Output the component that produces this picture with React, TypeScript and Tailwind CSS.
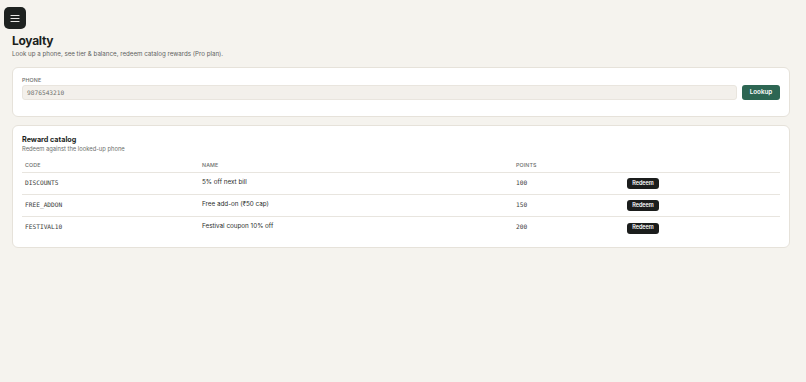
import React from "react";

const rewards = [
  { code: "DISCOUNT5", name: "5% off next bill", points: 100 },
  { code: "FREE_ADDON", name: "Free add-on (₹50 cap)", points: 150 },
  { code: "FESTIVAL10", name: "Festival coupon 10% off", points: 200 },
];

const mono = "font-['DejaVu_Sans_Mono','Liberation_Mono',monospace]";
const cols = "grid grid-cols-[177px_314px_111px_1fr] items-center";

export default function App() {
  return (
    <div className="min-h-[382px] w-full bg-[#f5f3ee] font-['Inter','Noto_Sans',sans-serif] text-[#1c1f1d]">
      <div className="px-[4px] pt-[7px]">
        <button className="flex h-[22px] w-[22px] items-center justify-center rounded-[5px] bg-[#1e2220]">
          <svg width="10" height="9" viewBox="0 0 10 9" fill="none">
            <path d="M1 1.5h8M1 4.5h8M1 7.5h8" stroke="#e9e9e6" strokeWidth="1.2" strokeLinecap="round" />
          </svg>
        </button>
      </div>
      <div className="flex flex-col pl-[12px] pr-[16px]">
        <h1 className="mt-[5px] text-[12px] font-bold leading-[14px] tracking-tight">Loyalty</h1>
        <p className="mt-[1px] text-[6.2px] leading-[9px] text-[#5e625f]">
          Look up a phone, see tier &amp; balance, redeem catalog rewards (Pro plan).
        </p>

        <div className="mt-[9px] rounded-[6px] border border-[#e6e2da] bg-white px-[9px] pt-[9px] pb-[16px]">
          <div className="text-[5.3px] font-medium leading-[7px] tracking-wide text-[#6b6e6b]">PHONE</div>
          <div className="mt-[1px] flex items-center gap-[5px]">
            <div className={`flex h-[15px] flex-1 items-center rounded-[3px] border border-[#e9e5de] bg-[#f3f0eb] px-[4px] text-[6.2px] text-[#6f716e] ${mono}`}>
              9876543210
            </div>
            <button className="h-[15px] w-[38px] rounded-[3px] bg-[#2d6653] text-[6.3px] font-semibold text-white">
              Lookup
            </button>
          </div>
        </div>

        <div className="mt-[8px] rounded-[6px] border border-[#e6e2da] bg-white px-[9px] pt-[9px] pb-[8px]">
          <h2 className="text-[7.2px] font-bold leading-[10px]">Reward catalog</h2>
          <p className="text-[5.8px] leading-[8px] text-[#6b6e6b]">Redeem against the looked-up phone</p>
          <div className={`${cols} mt-[6px] h-[14px] border-b border-[#e8e5df] text-[5.3px] font-medium tracking-wide text-[#6b6e6b]`}>
            <div className="px-[3px]">CODE</div>
            <div className="px-[3px]">NAME</div>
            <div className="px-[3px]">POINTS</div>
            <div />
          </div>
          {rewards.map((r, i) => (
            <div
              key={r.code}
              className={`${cols} h-[22px] ${i < rewards.length - 1 ? "border-b border-[#e8e5df]" : ""}`}
            >
              <div className={`px-[3px] pb-[2px] text-[6.2px] text-[#3a3d3b] ${mono}`}>{r.code}</div>
              <div className="px-[3px] pb-[2px] text-[6.3px] text-[#2a2d2b]">{r.name}</div>
              <div className={`px-[3px] pb-[2px] text-[6.2px] text-[#3a3d3b] ${mono}`}>{r.points}</div>
              <div className="flex items-center px-[3px]">
                <button className="flex h-[11px] w-[32px] items-center justify-center rounded-[3px] bg-[#1b1d1c] text-[5.5px] font-semibold leading-none text-white">
                  Redeem
                </button>
              </div>
            </div>
          ))}
        </div>
      </div>
    </div>
  );
}
